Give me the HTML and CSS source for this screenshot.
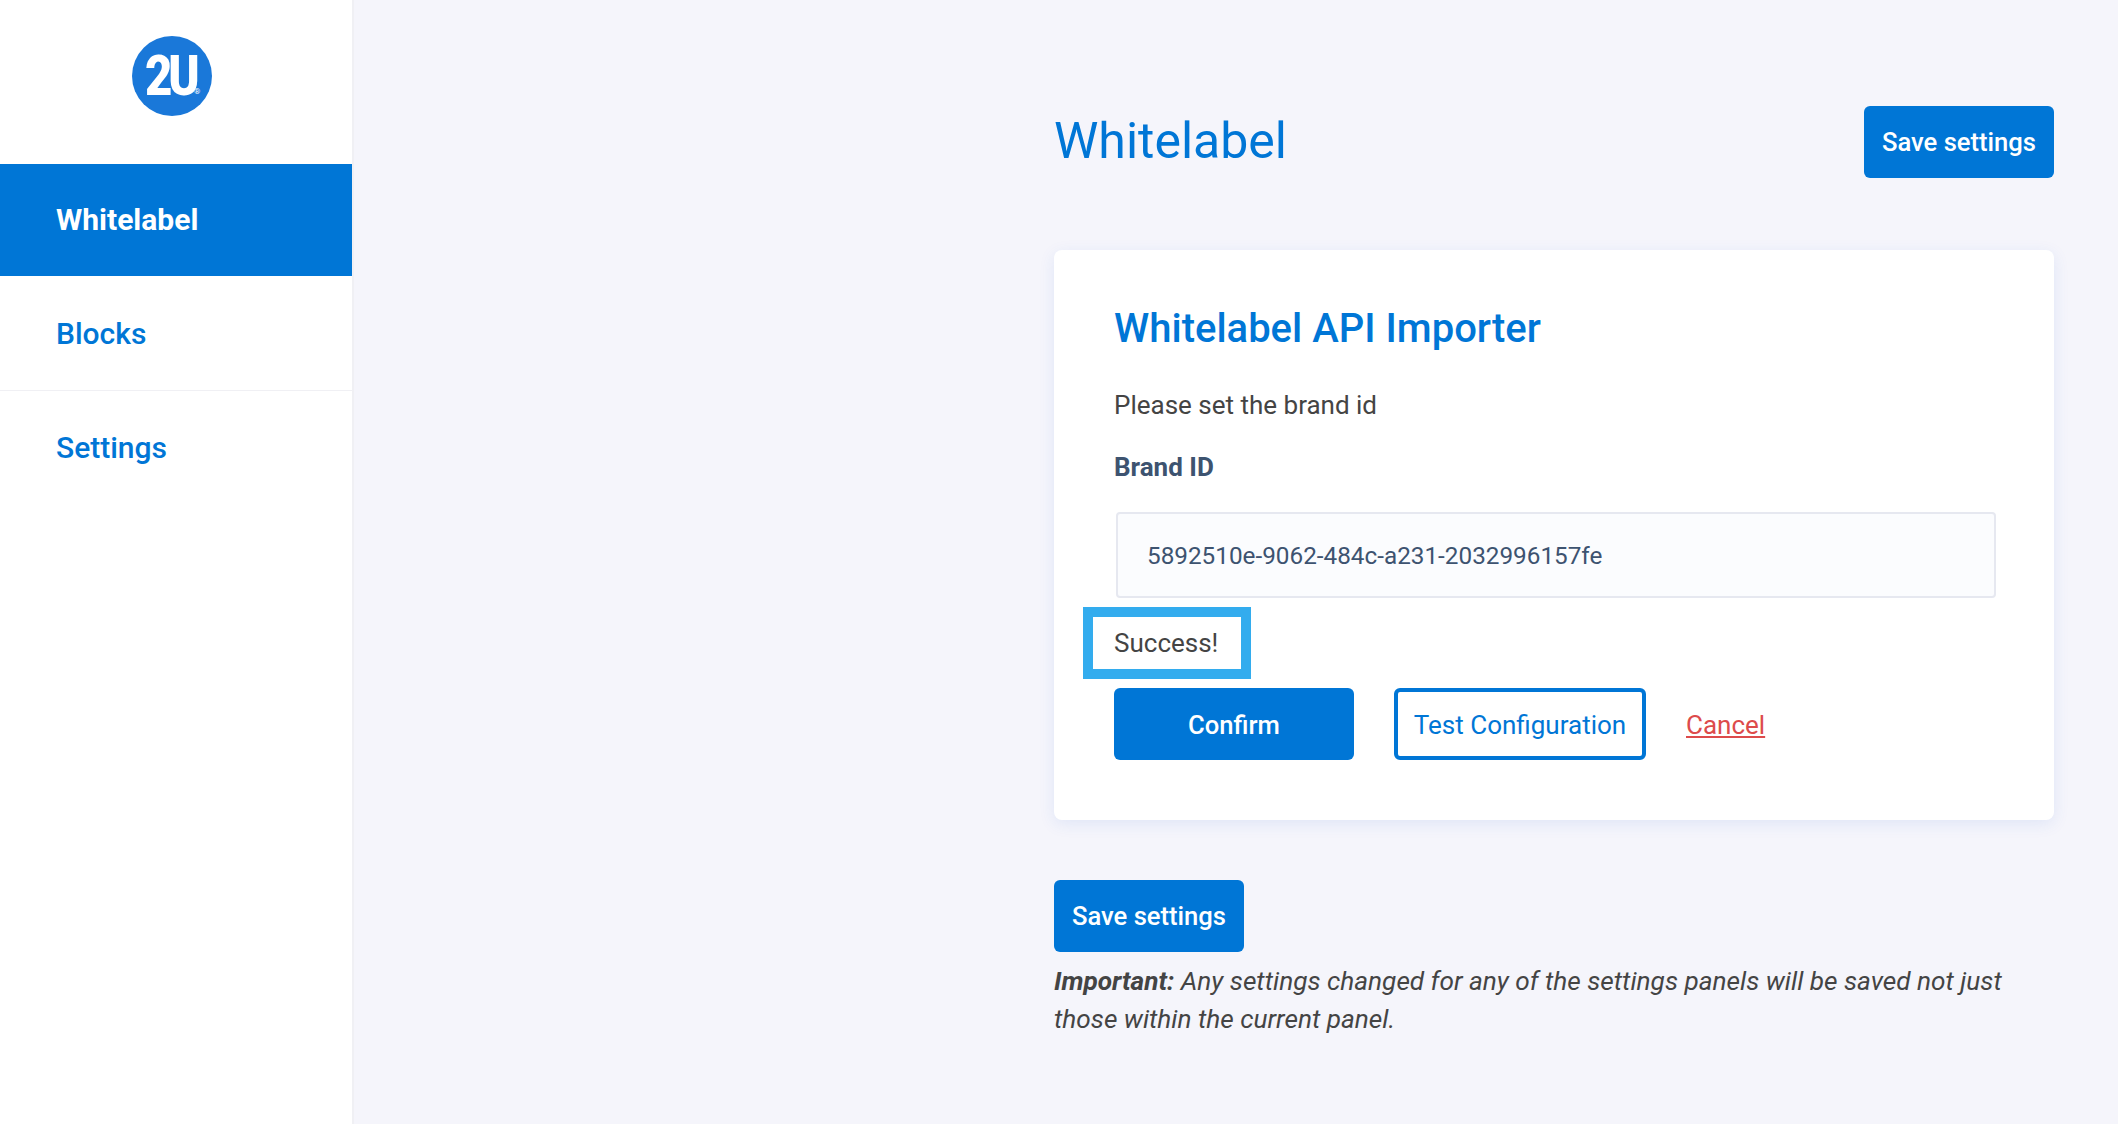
FILE: index.html
```html
<!DOCTYPE html>
<html lang="en">
<head>
    <meta charset="UTF-8">
    <meta name="viewport" content="width=device-width, initial-scale=1.0">
    <title>Whitelabel</title>
    <link rel="stylesheet" href="styles.css">
</head>
<body>
    <aside class="sidebar">
        <div class="logo-wrap">
            <div class="logo"><span class="logo-text">2U</span><span class="logo-reg">®</span></div>
        </div>
        <nav class="side-nav">
            <a class="side-link active" href="#">Whitelabel</a>
            <a class="side-link bordered" href="#">Blocks</a>
            <a class="side-link" href="#">Settings</a>
        </nav>
    </aside>

    <main class="main">
        <div class="page-head">
            <h1>Whitelabel</h1>
            <button class="btn">Save settings</button>
        </div>

        <section class="card">
            <h2>Whitelabel API Importer</h2>
            <p class="intro">Please set the brand id</p>
            <label class="field-label" for="brand-id">Brand ID</label>
            <input class="field" id="brand-id" type="text" value="5892510e-9062-484c-a231-2032996157fe">
            <div class="notice">Success!</div>
            <div class="actions">
                <button class="btn btn-confirm">Confirm</button>
                <button class="btn btn-outline">Test Configuration</button>
                <a class="cancel" href="#">Cancel</a>
            </div>
        </section>

        <button class="btn">Save settings</button>
        <p class="note"><strong>Important:</strong> Any settings changed for any of the settings panels will be saved not just those within the current panel.</p>
    </main>
</body>
</html>
```

FILE: styles.css
```css
* {
    margin: 0;
    padding: 0;
    box-sizing: border-box;
}

body {
    font-family: Roboto, Arial, sans-serif;
    font-size: 26px;
    line-height: 38px;
    color: #444;
    background-color: #f5f5fb;
    display: flex;
    min-height: 100vh;
}

/* sidebar */
.sidebar {
    width: 354px;
    flex-shrink: 0;
    background-color: #fff;
    border-right: 2px solid #f0f0f4;
}

.logo-wrap {
    height: 164px;
    display: flex;
    justify-content: center;
    padding-top: 36px;
    padding-right: 8px;
}

.logo {
    width: 80px;
    height: 80px;
    border-radius: 50%;
    background-color: #1a78d9;
    color: #fff;
    display: flex;
    align-items: center;
    justify-content: center;
    position: relative;
}

.logo-text {
    font-size: 55px;
    line-height: 40px;
    font-weight: 900;
    letter-spacing: -5px;
    margin-left: -4px;
    transform: scaleX(0.86);
}

.logo-reg {
    position: absolute;
    left: 62px;
    top: 51px;
    font-size: 8px;
    line-height: 10px;
}

.side-link {
    display: block;
    height: 114px;
    line-height: 114px;
    padding-left: 56px;
    font-size: 30px;
    font-weight: 500;
    color: #0076d6;
    text-decoration: none;
}

.side-link.active {
    height: 112px;
    line-height: 112px;
    background-color: #0076d6;
    color: #fff;
    font-weight: 700;
}

.side-link.bordered {
    height: 115px;
    line-height: 116px;
    border-bottom: 1px solid #f0f0f4;
}

/* main column */
.main {
    width: 1000px;
    margin-left: auto;
    margin-right: 64px;
    padding-top: 106px;
}

.page-head {
    display: flex;
    justify-content: space-between;
    align-items: center;
    margin-bottom: 72px;
}

h1 {
    font-size: 50px;
    line-height: 70px;
    padding-bottom: 2px;
    font-weight: 400;
    color: #0076d6;
}

.btn {
    display: inline-block;
    width: 190px;
    height: 72px;
    padding: 0;
    font-family: inherit;
    font-size: 25.6px;
    font-weight: 500;
    white-space: nowrap;
    color: #fff;
    background-color: #0076d6;
    border: none;
    border-radius: 6px;
}

.card {
    background-color: #fff;
    border-radius: 8px;
    padding: 50px 60px 60px;
    margin-bottom: 60px;
    box-shadow: 0 4px 16px rgba(40, 100, 220, 0.1);
}

h2 {
    font-size: 40px;
    line-height: 58px;
    font-weight: 500;
    color: #0076d6;
}

.intro {
    margin-top: 28px;
}

.field-label {
    display: block;
    margin-top: 24px;
    font-weight: 700;
    color: #3d5370;
}

.field {
    display: block;
    width: 880px;
    height: 86px;
    margin: 26px 0 0 2px;
    padding: 0 29px;
    font-family: inherit;
    font-size: 24.3px;
    color: #3d5370;
    background-color: #fbfcfe;
    border: 2px solid #e6e8f0;
    border-radius: 4px;
}

.notice {
    width: 168px;
    height: 72px;
    margin: 9px 0 0 -31px;
    padding-left: 21px;
    line-height: 52px;
    border: 10px solid #33acee;
    background-color: #fff;
}

.actions {
    display: flex;
    align-items: center;
    margin-top: 9px;
}

.btn-confirm {
    width: 240px;
    margin-right: 40px;
    padding-top: 1px;
}

.btn-outline {
    width: 252px;
    margin-right: 40px;
    padding-top: 1px;
    font-size: 26px;
    font-weight: 400;
    color: #0076d6;
    background-color: #fff;
    border: 4px solid #0076d6;
}

.cancel {
    color: #dd4b4b;
    padding-top: 1px;
}

.note {
    font-size: 26.2px;
    font-style: italic;
    margin-top: 10px;
}
```
